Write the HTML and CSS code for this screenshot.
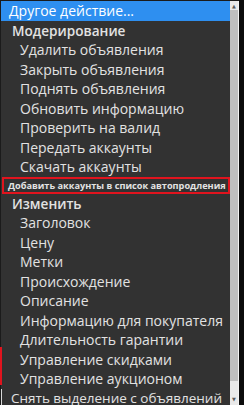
FILE: index.html
```html
<!DOCTYPE html>
<html>
<head>
  <meta charset="utf-8">
  <link rel="stylesheet" href="styles.css">
</head>
<body>
  <div class="dropdown">
    <div class="list">
      <div class="opt top selected">Другое действие...</div>
      <div class="group">Модерирование</div>
      <div class="opt">Удалить объявления</div>
      <div class="opt">Закрыть объявления</div>
      <div class="opt">Поднять объявления</div>
      <div class="opt">Обновить информацию</div>
      <div class="opt">Проверить на валид</div>
      <div class="opt">Передать аккаунты</div>
      <div class="opt">Скачать аккаунты</div>
      <div class="opt marked">Добавить аккаунты в список автопродления</div>
      <div class="group">Изменить</div>
      <div class="opt">Заголовок</div>
      <div class="opt">Цену</div>
      <div class="opt">Метки</div>
      <div class="opt">Происхождение</div>
      <div class="opt">Описание</div>
      <div class="opt">Информацию для покупателя</div>
      <div class="opt">Длительность гарантии</div>
      <div class="opt">Управление скидками</div>
      <div class="opt">Управление аукционом</div>
      <div class="opt top last">Снять выделение с объявлений</div>
    </div>
    <div class="rail">
      <span class="arrow">▲</span>
      <span class="arrow">▼</span>
    </div>
  </div>
</body>
</html>
```

FILE: styles.css
```css
body {
  margin: 0;
  background-color: #0c0c0c;
  font-family: "Open Sans", "Noto Sans", sans-serif;
}

/* fond : bords, trait rouge à gauche et piste de défilement */
.dropdown {
  display: flex;
  width: 239px;
  height: 405px;
  padding: 1px 1px 0 1px;
  box-sizing: border-box;
  overflow: hidden;
  background:
    linear-gradient(#e0141e, #e0141e) 0 347px / 2px 38px no-repeat,
    linear-gradient(#1b1b1b, #1b1b1b) 0 0 / 1px 100% no-repeat,
    linear-gradient(#1b1b1b, #1b1b1b) 0 0 / 100% 1px no-repeat,
    linear-gradient(#bfbfbf, #bfbfbf) 230px 10px / 8px 371px no-repeat,
    linear-gradient(#e9e9e9, #e9e9e9) 230px 0 / 8px 100% no-repeat,
    linear-gradient(#f4f4f4, #f4f4f4) 238px 0 / 1px 100% no-repeat,
    #323232;
}

.list {
  width: 229px;
  flex: none;
  overflow: hidden;
  display: flex;
  flex-direction: column;
  color: #e2e2e2;
  font-size: 14px;
}

.opt, .group {
  height: 19.5px;
  line-height: 19.5px;
  flex-shrink: 0;
  white-space: nowrap;
}

.opt {
  padding-left: 19px;
}

.group {
  padding-left: 11px;
  font-size: 13.6px;
  font-weight: 600;
}

.opt.top {
  padding-left: 8px;
}

.opt.selected {
  background-color: #2e8ff0;
  color: #ffffff;
}

.opt.last {
  padding-left: 9px;
  font-size: 13.5px;
  border-left: 1px solid #d8d8d8;
}

.opt.marked {
  height: 17px;
  line-height: 13px;
  margin-left: 1px;
  padding-left: 4px;
  font-size: 9.2px;
  font-weight: bold;
  border: 2px solid #e0141e;
  box-sizing: border-box;
}

.rail {
  width: 8px;
  flex: none;
  display: flex;
  flex-direction: column;
  justify-content: space-between;
  align-items: center;
  padding: 2px 0 3px;
  box-sizing: border-box;
  background:
    linear-gradient(#bfbfbf, #bfbfbf) 0 9px / 100% 371px no-repeat,
    #e9e9e9;
}

.arrow {
  font-family: "DejaVu Sans", sans-serif;
  font-size: 5px;
  line-height: 6px;
  color: #5a5a5a;
}
```
